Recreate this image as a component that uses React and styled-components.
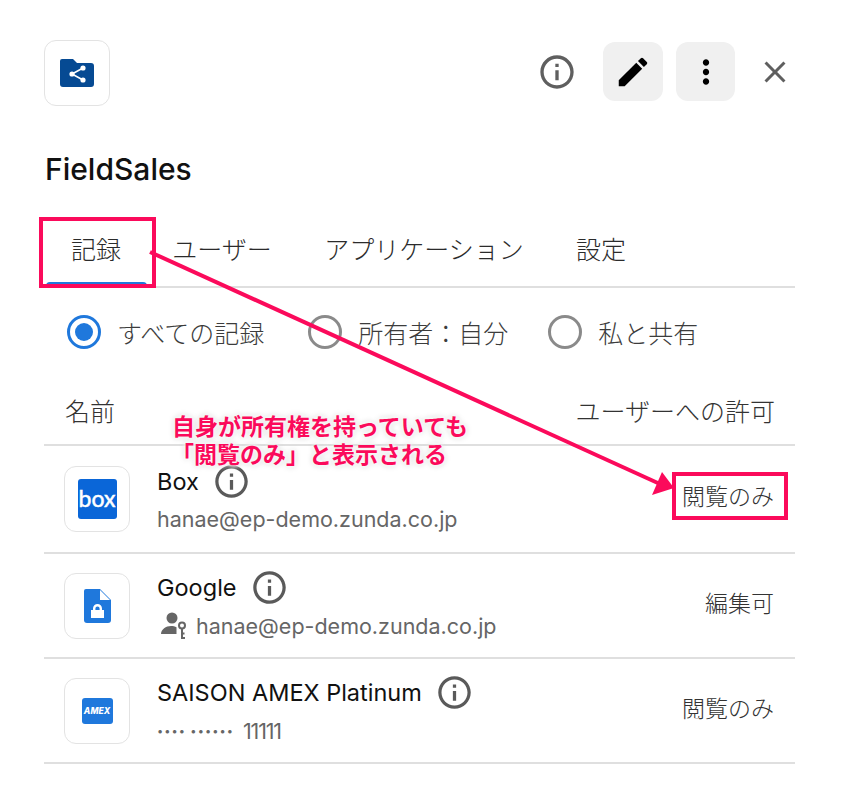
import styled, { createGlobalStyle } from 'styled-components';
import { MdOutlineInfo, MdEdit, MdMoreVert, MdClose } from 'react-icons/md';

const GlobalStyle = createGlobalStyle`
  html, body {
    margin: 0;
    padding: 0;
    background: #fff;
  }
  * {
    box-sizing: border-box;
  }
`;

const jp = `Inter, "Noto Sans CJK JP", sans-serif`;
const accent = '#fb0a5b';

const Page = styled.div`
  position: relative;
  width: 843px;
  height: 811px;
  padding: 40px 48px 0 44px;
  font-family: ${jp};
  overflow: hidden;
`;

const Header = styled.div`
  display: flex;
  align-items: center;
  height: 66px;
`;

const LogoBox = styled.div`
  width: 66px;
  height: 66px;
  flex: none;
  display: flex;
  align-items: center;
  justify-content: center;
  border: 1px solid #e3e3e3;
  border-radius: 12px;
  background: #fff;
`;

const Actions = styled.div`
  margin-left: auto;
  margin-bottom: 3px;
  display: flex;
  align-items: center;
  color: #5f5f5f;
`;

const SoftButton = styled.div`
  width: ${(p) => p.w}px;
  height: 59px;
  margin-left: ${(p) => p.ml}px;
  border-radius: 12px;
  background: #f0f0f0;
  color: #000;
  display: flex;
  align-items: center;
  justify-content: center;
`;

const CloseButton = styled.div`
  width: 36px;
  margin-left: 22px;
  margin-right: 2px;
  display: flex;
  justify-content: center;
  color: #5f5f5f;
`;

const Title = styled.h1`
  margin: 43px 0 0 1px;
  font-size: 30px;
  line-height: 40px;
  font-weight: 500;
  color: #111;
`;

const Tabs = styled.div`
  display: flex;
  margin: 33px 0 0 1px;
  height: 66px;
  border-bottom: 2px solid #dfdfdf;
`;

const Tab = styled.div`
  position: relative;
  width: ${(p) => p.w}px;
  padding-top: 12px;
  text-align: center;
  font-size: 25px;
  line-height: 32px;
  font-weight: 300;
  color: #2b2b2b;

  ${(p) =>
    p.active &&
    `
    &::after {
      content: '';
      position: absolute;
      left: 1px;
      right: 0;
      bottom: -2px;
      height: 6px;
      border-radius: 4px 4px 0 0;
      background: #1f78dc;
    }
  `}
`;

const Radios = styled.div`
  display: flex;
  align-items: center;
  height: 60px;
  margin: 14px 0 0 23px;
`;

const RadioItem = styled.div`
  display: flex;
  align-items: center;
  gap: 16px;
  margin-right: ${(p) => p.mr}px;
  font-size: 25px;
  font-weight: 300;
  color: #3c3c3c;
`;

const RadioMark = styled.span`
  width: 34px;
  height: 34px;
  flex: none;
  border-radius: 50%;
  border: 3px solid ${(p) => (p.on ? '#1f78dc' : '#8a8a8a')};
  display: flex;
  align-items: center;
  justify-content: center;

  &::after {
    content: '';
    display: ${(p) => (p.on ? 'block' : 'none')};
    width: 18px;
    height: 18px;
    border-radius: 50%;
    background: #1f78dc;
  }
`;

const ColumnHeader = styled.div`
  display: flex;
  justify-content: space-between;
  align-items: center;
  height: 84px;
  padding: 13px 20px 0 21px;
  font-size: 25px;
  font-weight: 300;
  color: #333;
  border-bottom: 2px solid #dfdfdf;
`;

const Row = styled.div`
  display: flex;
  align-items: center;
  height: ${(p) => p.h}px;
  padding: 0 21px 0 20px;
  border-bottom: 2px solid #dfdfdf;
`;

const RowText = styled.div`
  margin-left: 27px;
  flex: 1;
  min-width: 0;
`;

const RowName = styled.div`
  display: flex;
  align-items: center;
  gap: 13px;
  height: 34px;
  font-size: 23.5px;
  font-weight: 400;
  color: #111;

  svg {
    color: #5a5a5a;
  }
`;

const RowSub = styled.div`
  display: flex;
  align-items: center;
  gap: 9px;
  margin-top: 6px;
  font-size: 21.5px;
  line-height: 30px;
  color: #666;

  > svg {
    margin-left: 4px;
  }
`;

const Dots = styled.span`
  font-size: 11px;
  letter-spacing: 1.1px;
`;

const Digits = styled.span`
  letter-spacing: -1.2px;
`;

const Permission = styled.div`
  margin-bottom: 8px;
  font-size: 23px;
  font-weight: 300;
  color: #333;
`;

const BoxMark = styled.div`
  width: 39px;
  height: 40px;
  border-radius: 3px;
  background: #0a66d8;
  color: #fff;
  font-family: Lato, sans-serif;
  font-size: 23px;
  font-weight: 400;
  line-height: 38px;
  text-align: center;
  -webkit-text-stroke: 0.5px #fff;
`;

const AmexMark = styled.div`
  width: 31px;
  height: 26px;
  border-radius: 3px;
  background: #1f78dc;
  color: #fff;
  font-size: 8.5px;
  font-weight: 800;
  font-style: italic;
  line-height: 26px;
  text-align: center;
`;

// ここから下は赤い注釈
const Overlay = styled.svg`
  position: absolute;
  left: 0;
  top: 0;
  pointer-events: none;
`;

const Highlight = styled.div`
  position: absolute;
  left: ${(p) => p.x}px;
  top: ${(p) => p.y}px;
  width: ${(p) => p.w}px;
  height: ${(p) => p.h}px;
  border: 4px solid ${accent};
  pointer-events: none;
`;

const Note = styled.div`
  position: absolute;
  left: 140px;
  top: 413px;
  width: 360px;
  text-align: center;
  font-size: 23px;
  line-height: 28px;
  font-weight: 700;
  color: ${accent};
  text-shadow: 0 0 4px #fff, 0 0 4px #fff, 0 0 6px #bbb;
`;

const NoteLine = styled.span`
  display: block;
  margin-right: ${(p) => p.shift || 0}px;
`;

const FolderIcon = () => (
  <svg width="34" height="28" viewBox="0 0 34 28">
    <path d="M2 0h11l4 4h14a3 3 0 0 1 3 3v18a3 3 0 0 1-3 3H3a3 3 0 0 1-3-3V2a2 2 0 0 1 2-2z" fill="#064a93" />
    <g fill="#fff" stroke="#fff" strokeWidth="1.6">
      <path d="M23 9l-11 6 11 6" fill="none" />
      <circle cx="23" cy="9" r="1.8" />
      <circle cx="12" cy="15" r="1.8" />
      <circle cx="23" cy="21" r="1.8" />
    </g>
  </svg>
);

const LockFileIcon = () => (
  <svg width="27" height="34" viewBox="0 0 27 34">
    <path d="M2 0h14l11 11v20a3 3 0 0 1-3 3H3a3 3 0 0 1-3-3V2a2 2 0 0 1 2-2z" fill="#1f78dc" />
    <path d="M16 1l10 10H16z" fill="#fff" />
    <path d="M13.5 15a4.5 4.5 0 0 0-4.5 4.5V21H7v8h13v-8h-2v-1.5a4.5 4.5 0 0 0-4.5-4.5zm0 2.4a2.1 2.1 0 0 1 2.1 2.1V21h-4.2v-1.5a2.1 2.1 0 0 1 2.1-2.1z" fill="#fff" />
  </svg>
);

const UserKeyIcon = () => (
  <svg width="26" height="27" viewBox="0 0 26 27" fill="#666">
    <circle cx="11" cy="6" r="5.5" />
    <path d="M0 22c0-4.500 5-8 10-8 2 0 4 .4 5.500 1.200v6.800H0z" />
    <circle cx="21" cy="13.500" r="3" fill="none" stroke="#666" strokeWidth="2" />
    <path d="M21 16v10h3M21 21.500h2.500" fill="none" stroke="#666" strokeWidth="2" />
  </svg>
);

const rows = [
  {
    name: 'Box',
    sub: 'hanae@ep-demo.zunda.co.jp',
    perm: '閲覧のみ',
    logo: <BoxMark>box</BoxMark>,
    h: 108,
  },
  {
    name: 'Google',
    sub: 'hanae@ep-demo.zunda.co.jp',
    perm: '編集可',
    logo: <LockFileIcon />,
    keyed: true,
    h: 105,
  },
  {
    name: 'SAISON AMEX Platinum',
    perm: '閲覧のみ',
    logo: <AmexMark>AMEX</AmexMark>,
    masked: true,
    h: 105,
  },
];

const App = () => {
  return (
    <Page>
      <GlobalStyle />
      <Header>
        <LogoBox>
          <FolderIcon />
        </LogoBox>
        <Actions>
          <MdOutlineInfo size={40} />
          <SoftButton w={60} ml={26}>
            <MdEdit size={38} />
          </SoftButton>
          <SoftButton w={59} ml={13}>
            <MdMoreVert size={38} />
          </SoftButton>
          <CloseButton>
            <MdClose size={36} />
          </CloseButton>
        </Actions>
      </Header>

      <Title>FieldSales</Title>

      <Tabs>
        <Tab active w={102}>記録</Tab>
        <Tab w={150}>ユーザー</Tab>
        <Tab w={254}>アプリケーション</Tab>
        <Tab w={100}>設定</Tab>
      </Tabs>

      <Radios>
        <RadioItem mr={44}>
          <RadioMark on />
          すべての記録
        </RadioItem>
        <RadioItem mr={40}>
          <RadioMark />
          所有者：自分
        </RadioItem>
        <RadioItem>
          <RadioMark />
          私と共有
        </RadioItem>
      </Radios>

      <ColumnHeader>
        <span>名前</span>
        <span>ユーザーへの許可</span>
      </ColumnHeader>

      {rows.map((row) => (
        <Row key={row.name} h={row.h}>
          <LogoBox>{row.logo}</LogoBox>
          <RowText>
            <RowName>
              {row.name}
              <MdOutlineInfo size={39} />
            </RowName>
            <RowSub>
              {row.keyed && <UserKeyIcon />}
              {row.masked ? (
                <>
                  <Dots>•••• ••••••</Dots>
                  <Digits>11111</Digits>
                </>
              ) : (
                row.sub
              )}
            </RowSub>
          </RowText>
          <Permission>{row.perm}</Permission>
        </Row>
      ))}

      <Overlay width="843" height="811">
        <line x1="150" y1="252" x2="660" y2="484" stroke={accent} strokeWidth="4" />
        <polygon points="674,488 662,472 652,495" fill={accent} />
      </Overlay>
      <Highlight x={39} y={217} w={117} h={71} />
      <Highlight x={672} y={472} w={116} h={48} />
      <Note>
        <NoteLine>自身が所有権を持っていても</NoteLine>
        <NoteLine shift={22}>「閲覧のみ」と表示される</NoteLine>
      </Note>
    </Page>
  );
};

export default App;
